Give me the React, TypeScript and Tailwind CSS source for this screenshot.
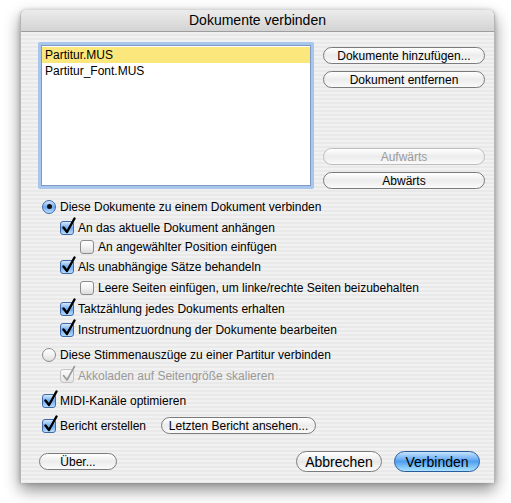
import React from "react";

const font = "font-['Liberation_Sans',Arial,sans-serif]";

const Check = ({ checked, disabled }: { checked?: boolean; disabled?: boolean }) => (
  <span className="relative inline-block w-[14px] h-[14px] shrink-0">
    <span
      className={`absolute inset-0 rounded-[3px] border ${
        disabled
          ? "border-[#c4c4c4] bg-gradient-to-b from-[#fbfbfb] to-[#e6e6e6]"
          : checked
          ? "border-[#3f6aa8] bg-gradient-to-b from-[#d6e8fc] via-[#6ea9ef] to-[#b9ddff]"
          : "border-[#8c8c8c] bg-gradient-to-b from-[#ffffff] via-[#f2f2f2] to-[#dcdcdc]"
      }`}
    />
    {checked && (
      <svg className="absolute left-[1px] top-[-4px]" width="16" height="18" viewBox="0 0 16 18">
        <path
          d="M2.5 10.5 L6 15 L13.5 1.5"
          fill="none"
          stroke={disabled ? "#9a9a9a" : "#000"}
          strokeWidth={disabled ? 1.6 : 2.4}
          strokeLinecap="round"
          strokeLinejoin="round"
        />
      </svg>
    )}
  </span>
);

const Radio = ({ on }: { on?: boolean }) => (
  <span
    className={`relative inline-flex items-center justify-center w-[14px] h-[14px] rounded-full border shrink-0 ${
      on
        ? "border-[#3f6aa8] bg-gradient-to-b from-[#d6e8fc] via-[#6ea9ef] to-[#b9ddff]"
        : "border-[#8c8c8c] bg-gradient-to-b from-[#ffffff] via-[#f2f2f2] to-[#dcdcdc]"
    }`}
  >
    {on && <span className="w-[5px] h-[5px] rounded-full bg-[#111]" />}
  </span>
);

const SmallButton = ({ label, disabled, className = "" }: { label: string; disabled?: boolean; className?: string }) => (
  <div
    className={`h-[17px] rounded-full border flex items-center justify-center text-[12px] leading-none bg-gradient-to-b from-[#ffffff] via-[#ececec] to-[#fafafa] ${
      disabled ? "border-[#bdbdbd] text-[#9b9b9b]" : "border-[#7b7b7b] text-black"
    } ${className}`}
  >
    {label}
  </div>
);

const Row = ({
  indent,
  h = "h-[21px]",
  children,
  label,
  muted,
}: {
  indent: string;
  h?: string;
  children: React.ReactNode;
  label: string;
  muted?: boolean;
}) => (
  <div className={`${h} flex items-center gap-[4px] ${indent}`}>
    {children}
    <span className={`text-[12px] leading-none ${muted ? "text-[#9a9a9a]" : "text-black"}`}>{label}</span>
  </div>
);

export default function App() {
  return (
    <div className={`w-[511px] h-[503px] bg-white pt-[10px] pl-[20px] ${font}`}>
      <div className="w-[475px] h-[473px] rounded-t-[6px] flex flex-col shadow-[0_7px_16px_rgba(0,0,0,0.45),0_0_4px_rgba(0,0,0,0.2)] border-x border-[#b5b5b5]">
        {/* title bar */}
        <div className="h-[22px] shrink-0 rounded-t-[6px] bg-gradient-to-b from-[#ececec] to-[#d3d3d3] border-b border-[#9e9e9e] flex items-center justify-center text-[14px] text-black">
          Dokumente verbinden
        </div>

        {/* body */}
        <div className="flex-1 flex flex-col bg-[repeating-linear-gradient(180deg,#f1f1f1_0px,#f1f1f1_2px,#e9e9e9_2px,#e9e9e9_4px)] pt-[10px]">
          <div className="flex pl-[17px] pr-[9px]">
            <div className="w-[276px] h-[147px] border-[3px] border-[#a9c6ec] rounded-[2px]">
              <div className="w-full h-full border border-[#7e99c2] bg-white pt-[1px] text-[12px] text-black">
                <div className="h-[16px] bg-[#fbe77c] flex items-center pl-[3px]">Partitur.MUS</div>
                <div className="h-[16px] flex items-center pl-[3px]">Partitur_Font.MUS</div>
              </div>
            </div>
            <div className="ml-[9px] w-[162px] flex flex-col justify-between">
              <div className="mt-[5px] flex flex-col gap-[7px]">
                <SmallButton label="Dokumente hinzufügen..." />
                <SmallButton label="Dokument entfernen" />
              </div>
              <div className="flex flex-col gap-[7px]">
                <SmallButton label="Aufwärts" disabled />
                <SmallButton label="Abwärts" />
              </div>
            </div>
          </div>

          <div className="mt-[7px] pl-[21px] flex flex-col">
            <Row indent="" label="Diese Dokumente zu einem Dokument verbinden">
              <Radio on />
            </Row>
            <Row indent="pl-[18px]" label="An das aktuelle Dokument anhängen">
              <Check checked />
            </Row>
            <Row indent="pl-[38px]" h="h-[18px]" label="An angewählter Position einfügen">
              <Check />
            </Row>
            <Row indent="pl-[18px]" label="Als unabhängige Sätze behandeln">
              <Check checked />
            </Row>
            <Row indent="pl-[38px]" label="Leere Seiten einfügen, um linke/rechte Seiten beizubehalten">
              <Check />
            </Row>
            <Row indent="pl-[18px]" label="Taktzählung jedes Dokuments erhalten">
              <Check checked />
            </Row>
            <Row indent="pl-[18px]" label="Instrumentzuordnung der Dokumente bearbeiten">
              <Check checked />
            </Row>
            <div className="h-[4px]" />
            <Row indent="" label="Diese Stimmenauszüge zu einer Partitur verbinden">
              <Radio />
            </Row>
            <Row indent="pl-[18px]" label="Akkoladen auf Seitengröße skalieren" muted>
              <Check checked disabled />
            </Row>
            <div className="h-[4px]" />
            <Row indent="" label="MIDI-Kanäle optimieren">
              <Check checked />
            </Row>
            <div className="h-[4px]" />
            <div className="h-[21px] flex items-center">
              <Check checked />
              <span className="ml-[4px] text-[12px] leading-none">Bericht erstellen</span>
              <SmallButton label="Letzten Bericht ansehen..." className="ml-[15px] w-[155px]" />
            </div>
          </div>

          <div className="mt-[15px] flex items-center pl-[18px] pr-[14px]">
            <SmallButton label="Über..." className="w-[78px]" />
            <div className="flex-1" />
            <div className="w-[86px] h-[21px] rounded-full border border-[#7b7b7b] bg-gradient-to-b from-[#ffffff] via-[#e9e9e9] to-[#fbfbfb] flex items-center justify-center text-[14px] leading-none text-black">
              Abbrechen
            </div>
            <div className="ml-[12px] w-[86px] h-[21px] rounded-full border border-[#2c5a9e] bg-gradient-to-b from-[#c6e3fb] via-[#4f9ef0] to-[#a8e3ff] flex items-center justify-center text-[14px] leading-none text-black">
              Verbinden
            </div>
          </div>
        </div>
      </div>
    </div>
  );
}
